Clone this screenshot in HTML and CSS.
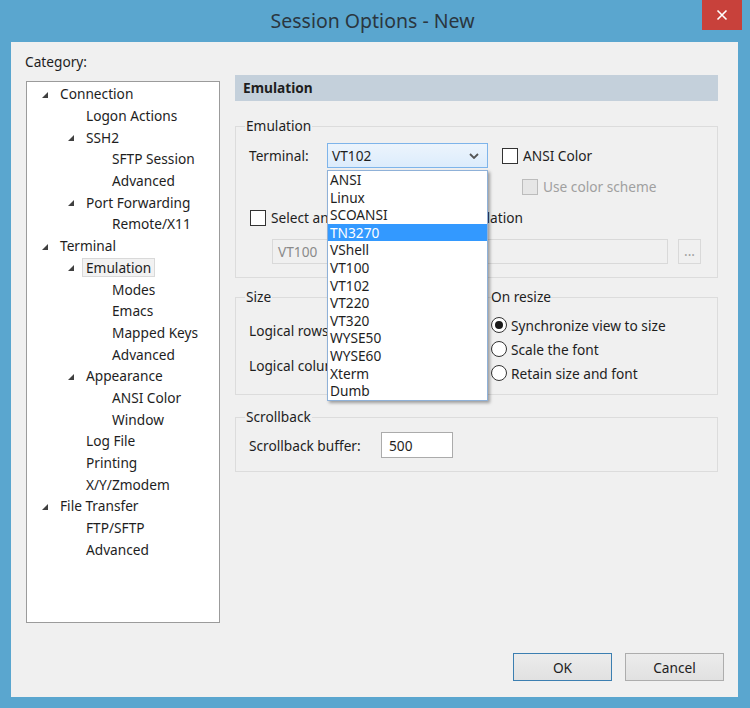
FILE: index.html
```html
<!DOCTYPE html>
<html>
<head>
    <link rel="stylesheet" href="styles.css">
</head>
<body>
    <div class="window">
        <div class="titlebar">
            <span></span>
            <div class="title">Session Options - New</div>
            <div class="close">
                <svg width="12" height="12" viewBox="0 0 12 12">
                    <path d="M1.5 1.5 L10.5 10.5 M10.5 1.5 L1.5 10.5" stroke="#fff" stroke-width="1.6" fill="none"/>
                </svg>
            </div>
        </div>

        <div class="client">
            <div class="main">
                <div class="category">
                    <div class="category-label">Category:</div>
                    <ul class="tree">
                        <li class="level-0"><span class="arrow"></span><span class="node">Connection</span></li>
                        <li class="level-1"><span class="arrow none"></span><span class="node">Logon Actions</span></li>
                        <li class="level-1"><span class="arrow"></span><span class="node">SSH2</span></li>
                        <li class="level-2"><span class="arrow none"></span><span class="node">SFTP Session</span></li>
                        <li class="level-2"><span class="arrow none"></span><span class="node">Advanced</span></li>
                        <li class="level-1"><span class="arrow"></span><span class="node">Port Forwarding</span></li>
                        <li class="level-2"><span class="arrow none"></span><span class="node">Remote/X11</span></li>
                        <li class="level-0"><span class="arrow"></span><span class="node">Terminal</span></li>
                        <li class="level-1"><span class="arrow"></span><span class="node selected">Emulation</span></li>
                        <li class="level-2"><span class="arrow none"></span><span class="node">Modes</span></li>
                        <li class="level-2"><span class="arrow none"></span><span class="node">Emacs</span></li>
                        <li class="level-2"><span class="arrow none"></span><span class="node">Mapped Keys</span></li>
                        <li class="level-2"><span class="arrow none"></span><span class="node">Advanced</span></li>
                        <li class="level-1"><span class="arrow"></span><span class="node">Appearance</span></li>
                        <li class="level-2"><span class="arrow none"></span><span class="node">ANSI Color</span></li>
                        <li class="level-2"><span class="arrow none"></span><span class="node">Window</span></li>
                        <li class="level-1"><span class="arrow none"></span><span class="node">Log File</span></li>
                        <li class="level-1"><span class="arrow none"></span><span class="node">Printing</span></li>
                        <li class="level-1"><span class="arrow none"></span><span class="node">X/Y/Zmodem</span></li>
                        <li class="level-0"><span class="arrow"></span><span class="node">File Transfer</span></li>
                        <li class="level-1"><span class="arrow none"></span><span class="node">FTP/SFTP</span></li>
                        <li class="level-1"><span class="arrow none"></span><span class="node">Advanced</span></li>
                    </ul>
                </div>

                <div class="panel">
                    <div class="panel-header">Emulation</div>

                    <fieldset class="group emulation-group">
                        <legend>Emulation</legend>
                        <div class="row">
                            <span class="field-label">Terminal:</span>
                            <div class="combo-wrap">
                                <div class="combo">
                                    <span>VT102</span>
                                    <svg width="10" height="6" viewBox="0 0 10 6">
                                        <path d="M1 1 L5 5 L9 1" stroke="#555" stroke-width="1.8" fill="none"/>
                                    </svg>
                                </div>
                                <ul class="dropdown">
                                    <li>ANSI</li>
                                    <li>Linux</li>
                                    <li>SCOANSI</li>
                                    <li class="highlight">TN3270</li>
                                    <li>VShell</li>
                                    <li>VT100</li>
                                    <li>VT102</li>
                                    <li>VT220</li>
                                    <li>VT320</li>
                                    <li>WYSE50</li>
                                    <li>WYSE60</li>
                                    <li>Xterm</li>
                                    <li>Dumb</li>
                                </ul>
                            </div>
                            <label class="check ansi-check"><span class="box"></span>ANSI Color</label>
                        </div>
                        <div class="row scheme-row">
                            <label class="check disabled"><span class="box"></span>Use color scheme</label>
                        </div>
                        <div class="row alt-check-row">
                            <label class="check"><span class="box"></span>Select an alternate keyboard emulation</label>
                        </div>
                        <div class="row alt-row">
                            <div class="textbox disabled alt-input">VT100</div>
                            <div class="browse">...</div>
                        </div>
                    </fieldset>

                    <div class="size-row">
                        <fieldset class="group size-group">
                            <legend>Size</legend>
                            <div class="row size-line">
                                <span>Logical rows:</span>
                            </div>
                            <div class="row size-line">
                                <span>Logical columns:</span>
                            </div>
                        </fieldset>
                        <fieldset class="group resize-group">
                            <legend>On resize</legend>
                            <label class="radio"><span class="dot checked"></span>Synchronize view to size</label>
                            <label class="radio"><span class="dot"></span>Scale the font</label>
                            <label class="radio"><span class="dot"></span>Retain size and font</label>
                        </fieldset>
                    </div>

                    <fieldset class="group scroll-group">
                        <legend>Scrollback</legend>
                        <div class="row">
                            <span class="scroll-label">Scrollback buffer:</span>
                            <div class="textbox small">500</div>
                        </div>
                    </fieldset>
                </div>
            </div>

            <div class="footer">
                <button class="btn default">OK</button>
                <button class="btn">Cancel</button>
            </div>
        </div>
    </div>
</body>
</html>
```

FILE: styles.css
```css
body {
    margin: 0;
    font-family: "Noto Sans", "Open Sans", sans-serif;
    font-size: 13.7px;
    color: #1e1e1e;
}
.window {
    width: 750px;
    height: 708px;
    box-sizing: border-box;
    background-color: #5aa6cf;
    padding: 0 12px 11px 11px;
    display: flex;
    flex-direction: column;
}
.titlebar {
    height: 42px;
    display: grid;
    grid-template-columns: 1fr auto 1fr;
    margin-right: -4px;
}
.title {
    font-size: 19.5px;
    line-height: 42px;
    color: #2a3640;
    margin-right: 8px;
}
.close {
    justify-self: end;
    width: 40px;
    height: 30px;
    background-color: #c8413b;
    display: flex;
    align-items: center;
    justify-content: center;
}
.client {
    flex: 1;
    background-color: #f0f0f0;
    padding: 12px 14px 16px 14px;
    display: flex;
    flex-direction: column;
}
.main {
    display: flex;
    gap: 14px;
}
.category {
    width: 196px;
}
.category-label {
    line-height: 16px;
    margin-bottom: 11px;
}
.tree {
    list-style: none;
    margin: 0 1px;
    padding: 1px 0;
    height: 542px;
    box-sizing: border-box;
    background-color: #fff;
    border: 1px solid #9b9b9b;
}
.tree li {
    height: 21.7px;
    display: flex;
    align-items: center;
    padding-left: 15px;
}
.tree .level-1 {
    padding-left: 41px;
}
.tree .level-2 {
    padding-left: 67px;
}
.arrow {
    width: 0;
    height: 0;
    border-left: 6px solid transparent;
    border-bottom: 6px solid #404040;
    margin-right: 8px;
    margin-top: 2px;
}
.arrow.none {
    border-bottom-color: transparent;
}
.node {
    padding: 0 3px;
    line-height: 17px;
    border: 1px solid transparent;
}
.node.selected {
    background-color: #f2f2f2;
    border-color: #d9d9d9;
}
.panel {
    width: 483px;
    margin-top: 21px;
}
.panel-header {
    height: 26px;
    line-height: 26px;
    padding-left: 8px;
    font-weight: bold;
    background-color: #c4d0db;
}
.group {
    margin: 0;
    border: 1px solid #dcdcdc;
    padding: 0;
    min-width: 0;
}
.group legend {
    line-height: 18px;
    padding: 0 1px;
    margin-left: -4px;
}
.emulation-group {
    margin-top: 16px;
    padding: 8px 14px 13px 13px;
}
.row {
    display: flex;
    align-items: center;
}
.field-label {
    width: 78px;
}
.combo-wrap {
    position: relative;
}
.combo {
    width: 161px;
    height: 25px;
    box-sizing: border-box;
    border: 1px solid #7eb4ea;
    background: linear-gradient(#ecf4fc, #dcecfc);
    display: flex;
    align-items: center;
    justify-content: space-between;
    padding: 0 8px 0 4px;
}
.dropdown {
    position: absolute;
    top: 27px;
    left: 0;
    width: 161px;
    box-sizing: border-box;
    margin: 0;
    padding: 0;
    list-style: none;
    background-color: #fff;
    border: 1px solid #8fb1d8;
    box-shadow: 2px 2px 3px rgba(0, 0, 0, 0.35);
    z-index: 2;
}
.dropdown li {
    height: 17.6px;
    line-height: 17.6px;
    padding-left: 2px;
}
.dropdown .highlight {
    background-color: #3399ff;
    color: #fff;
}
.check {
    display: flex;
    align-items: center;
}
.box {
    width: 16px;
    height: 16px;
    box-sizing: border-box;
    border: 1px solid #333;
    background-color: #fff;
    margin-right: 5px;
}
.ansi-check {
    margin-left: 14px;
}
.check.disabled {
    color: #a0a0a0;
}
.check.disabled .box {
    border-color: #bcbcbc;
    background-color: #e6e6e6;
}
.scheme-row {
    margin-top: 10px;
    padding-left: 273px;
    height: 17px;
}
.alt-check-row {
    margin-top: 14px;
    height: 17px;
    padding-left: 1px;
}
.alt-row {
    margin-top: 13px;
    padding-left: 23px;
}
.textbox {
    height: 25px;
    box-sizing: border-box;
    border: 1px solid #ababab;
    background-color: #fff;
    display: flex;
    align-items: center;
    padding-left: 7px;
}
.textbox.disabled {
    background-color: #f0f0f0;
    border-color: #d9d9d9;
    color: #8a8a8a;
    padding-left: 5px;
}
.alt-input {
    width: 396px;
}
.browse {
    width: 23px;
    height: 25px;
    box-sizing: border-box;
    margin-left: 10px;
    border: 1px solid #d9d9d9;
    color: #a0a0a0;
    text-align: center;
    line-height: 22px;
}
.size-row {
    display: flex;
    gap: 5px;
    margin-top: 10px;
}
.size-group {
    flex: 1;
    padding: 12px 0 15px 13px;
}
.size-line {
    height: 25px;
}
.size-line + .size-line {
    margin-top: 10px;
}
.textbox.small {
    width: 72px;
    height: 26px;
}
.resize-group {
    width: 237px;
    box-sizing: border-box;
    padding: 10px 0 12px 9px;
}
.resize-group legend {
    margin-left: 0;
    padding: 0;
}
.radio {
    display: flex;
    align-items: center;
    height: 18px;
}
.radio + .radio {
    margin-top: 6px;
}
.dot {
    width: 16px;
    height: 16px;
    box-sizing: border-box;
    border: 1px solid #333;
    border-radius: 50%;
    background-color: #fff;
    margin-right: 4px;
    display: flex;
    align-items: center;
    justify-content: center;
}
.dot.checked::after {
    content: "";
    width: 8px;
    height: 8px;
    border-radius: 50%;
    background-color: #1a1a1a;
}
.scroll-group {
    margin-top: 13px;
    padding: 6px 0 13px 13px;
}
.scroll-label {
    width: 132px;
}
.footer {
    margin-top: auto;
    display: flex;
    justify-content: flex-end;
    gap: 13px;
}
.btn {
    width: 99px;
    height: 28px;
    font-family: inherit;
    font-size: 13.7px;
    color: #1e1e1e;
    background: linear-gradient(#ececec, #e1e1e1);
    border: 1px solid #adadad;
    padding: 0;
}
.btn.default {
    border-color: #3c7fb1;
}
```
